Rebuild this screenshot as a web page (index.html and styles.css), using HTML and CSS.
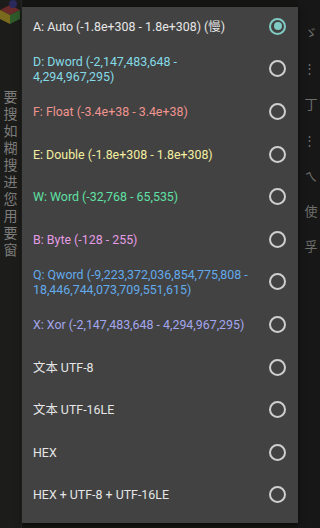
FILE: index.html
```html
<!DOCTYPE html>
<html lang="zh">
<head>
    <meta charset="UTF-8">
    <meta name="viewport" content="width=device-width, initial-scale=1.0">
    <title>Value type</title>
    <link rel="stylesheet" href="styles.css">
</head>
<body>
    <div class="screen">
        <!-- dimmed app behind the dialog -->
        <div class="backdrop">
            <div class="side side-left">
                <div class="app-logo">
                    <svg width="20" height="24" viewBox="0 0 20 24">
                        <polygon points="0,10 10,5 20,10 10,15" fill="#6b2a2a"/>
                        <polygon points="0,10 10,15 10,24 0,19" fill="#7a6a1e"/>
                        <polygon points="10,15 20,10 20,19 10,24" fill="#2f5a2a"/>
                        <circle cx="13" cy="4" r="4" fill="#2a2a5a"/>
                    </svg>
                </div>
                <div class="side-text">要搜如糊搜进您用要窗</div>
            </div>
            <div class="side side-right">
                <div class="side-text right-text">ゞ⋮丁⋮ㄟ使孚</div>
            </div>
        </div>

        <div class="dialog">
            <ul class="options" id="options"></ul>
        </div>
    </div>

    <script>
        const options = [
            { label: 'A: Auto (-1.8e+308 - 1.8e+308) (慢)', color: 'plain', checked: true },
            { label: 'D: Dword (-2,147,483,648 - 4,294,967,295)', color: 'dword' },
            { label: 'F: Float (-3.4e+38 - 3.4e+38)', color: 'float' },
            { label: 'E: Double (-1.8e+308 - 1.8e+308)', color: 'double' },
            { label: 'W: Word (-32,768 - 65,535)', color: 'word' },
            { label: 'B: Byte (-128 - 255)', color: 'byte' },
            { label: 'Q: Qword (-9,223,372,036,854,775,808 - 18,446,744,073,709,551,615)', color: 'qword' },
            { label: 'X: Xor (-2,147,483,648 - 4,294,967,295)', color: 'xor' },
            { label: '文本 UTF-8', color: 'plain' },
            { label: '文本 UTF-16LE', color: 'plain' },
            { label: 'HEX', color: 'plain' },
            { label: 'HEX + UTF-8 + UTF-16LE', color: 'plain' }
        ];

        // Build the radio list
        const list = document.getElementById('options');
        options.forEach(opt => {
            const item = document.createElement('li');
            item.className = 'option';
            item.innerHTML = `
                <span class="label ${opt.color}">${opt.label}</span>
                <span class="radio${opt.checked ? ' checked' : ''}"></span>
            `;
            list.appendChild(item);
        });
    </script>
</body>
</html>
```

FILE: styles.css
```css
html, body {
    margin: 0;
    padding: 0;
}
body {
    font-family: Roboto, "Noto Sans CJK SC", sans-serif;
    background-color: #151513;
    width: 320px;
    height: 528px;
    overflow: hidden;
}
.screen {
    position: relative;
    width: 320px;
    height: 528px;
}
.backdrop {
    display: flex;
    justify-content: space-between;
    height: 100%;
}
.side {
    width: 21px;
    display: flex;
    flex-direction: column;
    align-items: center;
}
.side-left {
    background-color: #1c1c1a;
    border-right: 1px solid #262624;
}
.side-right {
    background-color: #161716;
    width: 22px;
}
.app-logo {
    height: 24px;
    overflow: hidden;
    align-self: flex-start;
}
.app-logo svg {
    display: block;
}
.side-text {
    writing-mode: vertical-rl;
    text-orientation: upright;
    margin-top: 66px;
    font-family: "Noto Sans CJK SC", sans-serif;
    font-size: 14px;
    line-height: 16px;
    letter-spacing: 3px;
    color: #7c7c7a;
}
.right-text {
    margin-top: 26px;
    padding-left: 3px;
    letter-spacing: 22px;
    color: #6e6e6c;
    font-size: 13px;
}
.dialog {
    position: absolute;
    left: 22px;
    top: 7px;
    width: 276px;
    height: 516px;
    background-color: #424242;
    overflow: hidden;
    box-shadow: 0 2px 6px rgba(0,0,0,0.5);
}
.options {
    list-style: none;
    margin: -2px 0 0 0;
    padding: 0;
}
.option {
    height: 42.6px;
    display: flex;
    align-items: center;
    justify-content: space-between;
    padding: 0 12px 0 11px;
}
.label {
    font-size: 12.4px;
    line-height: 15px;
    width: 222px;
    color: #e6e6e6;
}
.plain  { color: #e6e6e6; }
.dword  { color: #84dbe6; }
.float  { color: #f09490; }
.double { color: #f4eea0; }
.word   { color: #5fe0a4; }
.byte   { color: #e49ce4; }
.qword  { color: #62aaec; }
.xor    { color: #a4a6ee; }

.radio {
    width: 13px;
    height: 13px;
    border: 2px solid #cfcfcf;
    border-radius: 50%;
    flex-shrink: 0;
    position: relative;
}
.radio.checked {
    border-color: #80cbc4;
}
.radio.checked::after {
    content: "";
    position: absolute;
    left: 2.5px;
    top: 2.5px;
    width: 8px;
    height: 8px;
    border-radius: 50%;
    background-color: #80cbc4;
}
```
